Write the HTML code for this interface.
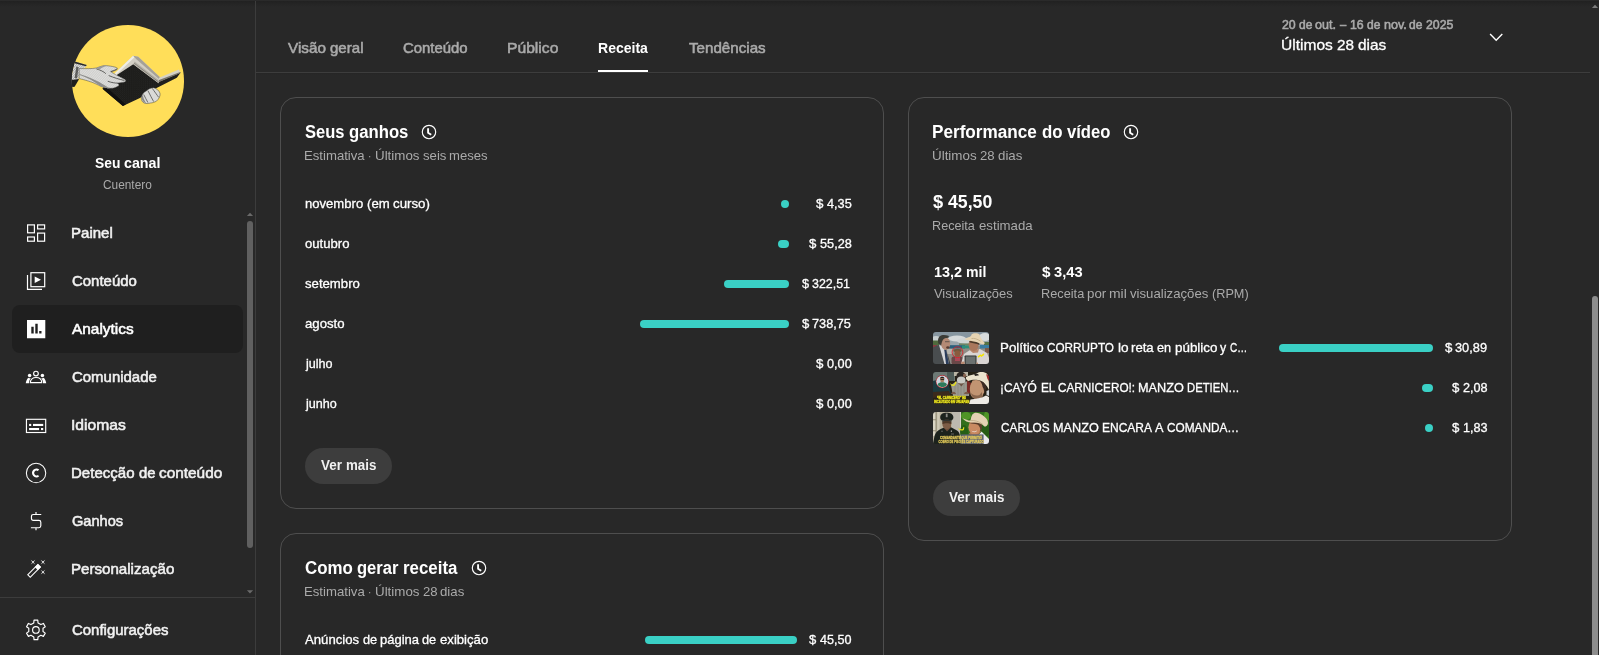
<!DOCTYPE html>
<html lang="pt-BR">
<head>
<meta charset="utf-8">
<title>Analytics do canal - YouTube Studio</title>
<style>
*{box-sizing:border-box;margin:0;padding:0}
html,body{width:1599px;height:655px;overflow:hidden;background:#282828}
body{font-family:"Liberation Sans",sans-serif;color:#fff;position:relative}
.a{position:absolute}
.t{position:absolute;white-space:nowrap;line-height:1;transform-origin:0 50%}
.wr{font-weight:normal}
.wm{font-weight:normal;-webkit-text-stroke:0.3px currentColor}
.wM{font-weight:normal;-webkit-text-stroke:0.55px currentColor}
.wb{font-weight:bold}
.card{position:absolute;border:1px solid #4e4e4e;border-radius:16px}
.bar{position:absolute;height:8px;border-radius:4px;background:#3ad0c5}
.btn{position:absolute;width:87px;height:36px;border-radius:18px;background:#3d3d3d}
.th{position:absolute;width:56px;height:32px;border-radius:3px;overflow:hidden}
.th svg{display:block}
</style>
</head>
<body>
<div class="a" style="left:0;top:1px;width:1599px;height:6px;background:linear-gradient(#212121,#242424 40%,#282828)"></div><div class="a" style="left:0;top:0;width:1599px;height:1px;background:#2a2a2a"></div>
<div class="a" style="left:255px;top:1px;width:1px;height:654px;background:#3c3c3c"></div>
<div class="a" style="left:0;top:597px;width:255px;height:1px;background:#3c3c3c"></div>
<div class="a" style="left:12px;top:305px;width:231px;height:48px;border-radius:8px;background:#1f1f1f"></div>
<div class="a" style="left:247px;top:221px;width:6px;height:327px;border-radius:3px;background:#606060"></div>
<svg class="a" style="left:246px;top:211px" width="8" height="6" viewBox="0 0 8 6"><path d="M0.9 5 L4 1.8 L7.1 5Z" fill="#6a6a6a"/></svg>
<svg class="a" style="left:246px;top:589px" width="8" height="6" viewBox="0 0 8 6"><path d="M0.9 1.3 L4 4.5 L7.1 1.3Z" fill="#6a6a6a"/></svg>
<div class="a" style="left:71.6px;top:24.7px;width:112.8px;height:112px;border-radius:50%;background:#ffde59"></div>
<svg class="a" style="left:68px;top:50px" width="120" height="62" viewBox="0 0 1268 655">
<defs><clipPath id="avc"><circle cx="634" cy="322" r="594"/></clipPath>
<pattern id="hat" width="14" height="14" patternUnits="userSpaceOnUse" patternTransform="rotate(35)"><rect width="14" height="14" fill="#e4e4e2"/><rect width="14" height="4.5" fill="#8c8c8a"/></pattern>
<pattern id="spk" width="22" height="22" patternUnits="userSpaceOnUse"><rect width="22" height="22" fill="#1c1c1a"/><rect x="3" y="5" width="5" height="4" fill="#4a4a48"/><rect x="14" y="15" width="4" height="4" fill="#3c3c3a"/></pattern></defs>
<g clip-path="url(#avc)">
<path d="M30 300 L72 122 L198 158 L182 186 L128 205 L112 300 L60 392 L30 392Z" fill="url(#hat)"/>
<path d="M72 122 L198 158 L190 172 L68 140Z" fill="#2a2a28"/>
<path d="M30 318 L118 306 L70 388 L30 395Z" fill="#1f1f1d"/>
<path d="M88 175 L112 182 L96 300 L70 296Z" fill="#3a3a38" opacity=".75"/>
<path d="M505 262 L690 135 L955 335 L1190 238 L1150 292 L905 418 L760 508 L580 592 L365 410 L420 300 L520 275Z" fill="url(#spk)"/>
<path d="M365 410 L580 592 L610 575 L420 405Z" fill="#101010"/>
<path d="M118 196 C190 196 250 200 300 190 C340 178 370 160 410 166 C450 170 500 176 522 192 C528 208 500 220 452 228 C480 250 560 290 600 310 C618 322 612 338 590 340 C560 346 540 346 520 350 C545 360 545 378 520 386 C500 400 470 408 440 404 C410 402 385 400 350 385 C310 365 280 350 250 340 C200 322 160 312 118 302Z" fill="#dcdcda"/><path d="M118 196 C190 196 250 200 300 190 C340 178 370 160 410 166 C450 170 500 176 522 192 C528 208 500 220 452 228 C480 250 560 290 600 310 C618 322 612 338 590 340 C560 346 540 346 520 350 C545 360 545 378 520 386 C500 400 470 408 440 404 C410 402 385 400 350 385 C310 365 280 350 250 340 C200 322 160 312 118 302Z" fill="url(#hat)" opacity=".28"/><path d="M118 196 C190 196 250 200 300 190 C340 178 370 160 410 166 C450 170 500 176 522 192 C528 208 500 220 452 228 C480 250 560 290 600 310 C618 322 612 338 590 340 C560 346 540 346 520 350 C545 360 545 378 520 386 C500 400 470 408 440 404 C410 402 385 400 350 385 C310 365 280 350 250 340 C200 322 160 312 118 302Z" fill="none" stroke="#3a3a38" stroke-width="6" opacity=".8"/>
<path d="M118 262 C200 290 270 330 350 385 C385 400 410 402 440 404 C400 380 330 330 250 300 C200 280 150 262 118 250Z" fill="#8e8e8c"/>
<path d="M452 228 C470 222 500 214 518 200 M430 270 C480 290 540 310 596 322 M420 330 C460 345 500 350 522 350 M300 200 C340 210 380 230 400 250" stroke="#4c4c4a" stroke-width="9" fill="none"/>
<path d="M300 190 C340 178 370 160 410 166 C380 175 350 190 330 210Z" fill="#9a9a98"/>
<path d="M492 248 L688 62 L742 72 L978 292 L958 350 L690 150 L512 266Z" fill="#d2cec4"/>
<path d="M688 62 L742 72 L978 292 L970 315 L720 95Z" fill="#a5a198"/>
<path d="M492 248 L688 62 L700 80 L515 256Z" fill="#f0eee6"/>
<path d="M690 150 L958 350 L966 322 L705 122Z" fill="#b5b1a7"/><path d="M700 140 L960 340" stroke="#6f6c66" stroke-width="7"/>
<path d="M962 292 L1172 206 L1186 238 L956 338Z" fill="#d6d2c6"/>
<path d="M962 318 L1186 232 L1190 244 L956 342Z" fill="#77736b"/>
<path d="M775 505 C780 465 800 445 830 430 C850 410 880 398 905 398 C935 405 960 428 972 455 C980 480 960 520 935 540 C915 552 890 560 870 560 C850 568 820 568 805 560 C785 550 772 530 775 505Z" fill="#dadad8"/><path d="M775 505 C780 465 800 445 830 430 C850 410 880 398 905 398 C935 405 960 428 972 455 C980 480 960 520 935 540 C915 552 890 560 870 560 C850 568 820 568 805 560 C785 550 772 530 775 505Z" fill="none" stroke="#3a3a38" stroke-width="6" opacity=".8"/>
<path d="M800 470 C815 500 830 530 845 556 M845 430 C865 470 885 510 905 545 M890 405 C915 440 940 475 958 500" stroke="#5a5a58" stroke-width="9" fill="none"/>
<path d="M775 505 C785 540 805 560 830 566 C810 540 795 510 790 470Z" fill="#8a8a88"/>
</g></svg>
<svg class="a" style="left:0;top:0" width="255" height="655" viewBox="0 0 255 655"><g transform="translate(24,221)"><g fill="none" stroke="#fff" stroke-width="1.2"><rect x="3.6" y="3.9" width="6.8" height="7.9"/><rect x="13.6" y="3.9" width="7" height="4.0"/><rect x="3.6" y="16.0" width="6.8" height="4.2"/><rect x="13.6" y="12.1" width="7" height="8.1"/></g></g><g transform="translate(24,269)"><g fill="none" stroke="#fff" stroke-width="1.2"><rect x="6.9" y="3.7" width="13.8" height="14"/><path d="M3.5 6.1 V20.3 H18"/></g><path d="M10.7 7.4 V14.1 L17 10.75Z" fill="#fff"/></g><g transform="translate(24,317)"><path fill="#fff" fill-rule="evenodd" d="M3 3H21.3V21.2H3Z M7.3 9.8H9.7V16.4H7.3Z M11.3 6.8H13.7V16.4H11.3Z M15.2 13.9H17.5V16.4H15.2Z"/></g><g transform="translate(24,365)"><g fill="none" stroke="#fff" stroke-width="1.15"><circle cx="11.96" cy="8.55" r="2.35"/><path d="M6.3 17.65 C6.3 14.3 8.9 12.5 12 12.5 S17.7 14.3 17.7 17.65 Z"/></g><g fill="#fff"><circle cx="5.6" cy="10.6" r="1.75"/><circle cx="18.4" cy="10.6" r="1.75"/><path d="M4.3 12.7 C3 14 2 16 1.75 18.2 H5.0 C5.1 16.1 5.7 14.4 6.8 13.3 C5.9 13.3 5 13.2 4.3 12.7Z"/><path d="M19.7 12.7 C21 14 22 16 22.25 18.2 H19.0 C18.9 16.1 18.3 14.4 17.2 13.3 C18.1 13.3 19 13.2 19.7 12.7Z"/></g></g><g transform="translate(0,0)"><rect x="26.45" y="419.3" width="19.25" height="13.2" fill="none" stroke="#fff" stroke-width="1.15"/><g fill="#fff"><rect x="29.1" y="423.9" width="2.1" height="2.1"/><rect x="33" y="423.9" width="10.2" height="2.1"/><rect x="29.1" y="428" width="10" height="2.1"/><rect x="41" y="428" width="2.2" height="2.1"/></g></g><g transform="translate(0,0)"><circle cx="36.06" cy="472.95" r="9.7" fill="none" stroke="#fff" stroke-width="1.05"/><path d="M38.5 470.3 A3.2 3.55 0 1 0 38.5 475.6" fill="none" stroke="#fff" stroke-width="2"/></g><g transform="translate(0,0)"><path fill="none" stroke="#fff" stroke-width="1.15" d="M41.25 514.5 H33.4 Q31.45 514.5 31.45 516.4 V518.4 Q31.45 520.3 33.4 520.3 H38.9 Q40.8 520.3 40.8 522.2 V525.8 Q40.8 527.7 38.9 527.7 H30.9 M36 512 V514.5 M36 527.7 V530.2"/></g><g transform="translate(0,0)"><g transform="translate(34.07,570.9) rotate(-45)"><rect x="-7.15" y="-1.75" width="14.3" height="3.5" fill="none" stroke="#fff" stroke-width="1.05"/><rect x="3.2" y="-2.2" width="4.45" height="4.4" fill="#fff"/></g><path fill="#fff" d="M30.7 559.85 L33.0 561.6 L35.3 559.85 L33.55 562.15 L35.3 564.4499999999999 L33.0 562.6999999999999 L30.7 564.4499999999999 L32.45 562.15Z"/><path fill="#fff" d="M40.67 559.85 L42.97 561.6 L45.269999999999996 559.85 L43.519999999999996 562.15 L45.269999999999996 564.4499999999999 L42.97 562.6999999999999 L40.67 564.4499999999999 L42.42 562.15Z"/><path fill="#fff" d="M40.67 569.8000000000001 L42.97 571.5500000000001 L45.269999999999996 569.8000000000001 L43.519999999999996 572.1 L45.269999999999996 574.4 L42.97 572.65 L40.67 574.4 L42.42 572.1Z"/></g><path d="M33.77 622.92 L34.01 620.18 L37.79 620.18 L38.03 622.92 L40.88 624.56 L43.37 623.41 L45.26 626.68 L43.01 628.26 L43.01 631.54 L45.26 633.12 L43.37 636.39 L40.88 635.24 L38.03 636.88 L37.79 639.62 L34.01 639.62 L33.77 636.88 L30.92 635.24 L28.43 636.39 L26.54 633.12 L28.79 631.54 L28.79 628.26 L26.54 626.68 L28.43 623.41 L30.92 624.56Z" fill="none" stroke="#fff" stroke-width="1.15" stroke-linejoin="round"/><circle cx="35.9" cy="629.9" r="3.3" fill="none" stroke="#fff" stroke-width="1.15"/></svg>
<div class="a" style="left:256px;top:72px;width:1334px;height:1px;background:#3d3d3d"></div>
<div class="a" style="left:256px;top:73px;width:1334px;height:2px;background:linear-gradient(#252525,#282828)"></div>
<div class="a" style="left:598.4px;top:70px;width:49.6px;height:2.3px;background:#fff"></div>
<svg class="a" style="left:1486px;top:30px" width="20" height="14" viewBox="0 0 20 14"><path d="M4.1 4.1 L10.2 10.3 L16.3 4.1" fill="none" stroke="#fff" stroke-width="1.4"/></svg>
<div class="a" style="left:1592px;top:296px;width:6px;height:380px;border-radius:3px;background:#8c8c8c"></div>
<svg class="a" style="left:1591px;top:3px" width="8" height="6" viewBox="0 0 8 6"><path d="M0.9 5 L4 1.8 L7.1 5Z" fill="#7c7c7c"/></svg>
<div class="card" style="left:280px;top:97px;width:604px;height:412px"></div>
<div class="card" style="left:908px;top:97px;width:604px;height:444px"></div>
<div class="card" style="left:280px;top:533px;width:604px;height:200px"></div>
<svg class="a" style="left:419px;top:122.05000000000001px" width="20" height="20" viewBox="-10 -10 20 20"><circle r="6.7" fill="none" stroke="#fff" stroke-width="1.15"/><path d="M-0.9 -3.85 V0.7 L2.2 2.7" fill="none" stroke="#fff" stroke-width="1.9"/></svg>
<svg class="a" style="left:1120.8px;top:122.05000000000001px" width="20" height="20" viewBox="-10 -10 20 20"><circle r="6.7" fill="none" stroke="#fff" stroke-width="1.15"/><path d="M-0.9 -3.85 V0.7 L2.2 2.7" fill="none" stroke="#fff" stroke-width="1.9"/></svg>
<svg class="a" style="left:469px;top:558.05px" width="20" height="20" viewBox="-10 -10 20 20"><circle r="6.7" fill="none" stroke="#fff" stroke-width="1.15"/><path d="M-0.9 -3.85 V0.7 L2.2 2.7" fill="none" stroke="#fff" stroke-width="1.9"/></svg>
<div class="bar" style="left:781px;top:200px;width:8px"></div>
<div class="bar" style="left:778px;top:240px;width:11px"></div>
<div class="bar" style="left:724px;top:280px;width:65px"></div>
<div class="bar" style="left:640px;top:320px;width:149px"></div>
<div class="bar" style="left:645px;top:636px;width:152px"></div>
<div class="bar" style="left:1279px;top:344px;width:154px"></div>
<div class="bar" style="left:1422px;top:384px;width:11px"></div>
<div class="bar" style="left:1424.5px;top:424px;width:8.5px"></div>
<div class="btn" style="left:305px;top:448px"></div>
<div class="btn" style="left:933px;top:480px"></div>
<svg class="a" style="left:933px;top:332px" width="56" height="32" viewBox="0 0 56 32"><defs><clipPath id="t1c"><rect width="56" height="32" rx="3" ry="3"/></clipPath><filter id="t1cb" x="-10%" y="-10%" width="120%" height="120%"><feGaussianBlur stdDeviation="0.45"/></filter></defs><g clip-path="url(#t1c)"><g filter="url(#t1cb)">
<rect width="56" height="32" fill="#9aa6ac"/>
<rect width="56" height="6" fill="#8796a0"/>
<ellipse cx="24" cy="6.5" rx="9" ry="3" fill="#d5d9da"/>
<ellipse cx="36" cy="9" rx="12" ry="3.2" fill="#cfd4d4"/>
<ellipse cx="52" cy="5" rx="6" ry="4" fill="#d8dcdc"/>
<ellipse cx="3" cy="7" rx="5" ry="3" fill="#c8cfd0"/>
<rect y="8.5" width="6" height="5" fill="#4f6a3c"/>
<rect x="51" y="10" width="5" height="4" fill="#557244"/>
<rect x="26" y="11.4" width="10" height="2.2" fill="#6f8466"/>
<rect y="14" width="56" height="18" fill="#8f8d86"/>
<rect x="16" y="13.2" width="16" height="3.2" fill="#2a5e7c"/>
<rect x="29" y="13.4" width="8" height="3" fill="#2f8f7a"/>
<rect x="47" y="13" width="9" height="3.5" fill="#3a7ca0"/>
<rect y="13" width="4" height="3" fill="#8a3a40"/>
<rect x="52" y="16" width="4" height="5" fill="#7a5a4a"/>
<rect x="14" y="17" width="6" height="5" fill="#b7b5ae"/>
<!-- center person -->
<rect x="18.5" y="24.5" width="11" height="8" rx="2" fill="#6b4646"/>
<rect x="22" y="25" width="5" height="4" fill="#a84a58"/>
<ellipse cx="24.5" cy="18.6" rx="4.2" ry="1.8" fill="#6e5a3c"/>
<ellipse cx="24.5" cy="21.6" rx="3" ry="3.2" fill="#8a5a3c"/>
<circle cx="24.5" cy="20.2" r="5.4" fill="none" stroke="#d8242a" stroke-width="0.9"/>
<!-- left man -->
<path d="M0 15.5 L5 13 L10 13.5 L17 32 L0 32Z" fill="#4a4d4f"/>
<path d="M6 13 L10 14 L17 32 L11.5 32Z" fill="#d7d8da"/>
<path d="M11.3 18 L13.2 18 L16 32 L13 32Z" fill="#2b3c5c"/>
<path d="M14 20 L17.5 32 L16 32Z" fill="#3e4143"/>
<ellipse cx="12.6" cy="11.6" rx="4.6" ry="6.2" fill="#b48a74"/>
<path d="M5 9 C5 3 10 2.2 15.5 3.8 C16.5 5.5 15 6 12 6.2 C9.5 7 9 10 8.2 13 C6 13 5 11.5 5 9Z" fill="#3b3a35"/>
<ellipse cx="14.8" cy="15.5" rx="1.6" ry="1.2" fill="#5a3a30"/>
<rect x="12" y="9.3" width="4.5" height="0.9" fill="#5b5049"/>
<!-- right man -->
<path d="M28 32 L31 22 L37 18 L47 17 L54 21 L56 26 L56 32Z" fill="#d9d5d3"/>
<path d="M36.5 18 L40 21 L45 20.5 L46 17Z" fill="#b7866c"/>
<ellipse cx="40.6" cy="12.8" rx="5" ry="6.2" fill="#a9775c"/>
<path d="M36 9 L46 9.5 L46.5 13 L44 12 L37 10.5Z" fill="#4c3a2c"/>
<path d="M31.5 7.2 C36 4.5 38 5.5 38.5 2.5 C40 0.8 45 0.8 46.5 2.6 C47.5 5 48 7 51.5 10.5 C52.5 12.5 50 12.6 47 11.6 C42 9 37 9.2 33 7.8Z" fill="#e6d4b3"/>
<path d="M38.5 6.5 C41 6 44.5 7 47.5 9.2" stroke="#bfa983" stroke-width="0.8" fill="none"/>
<rect x="31.6" y="23.4" width="11.9" height="9" rx="0.8" fill="#2f3231"/>
<rect x="32.6" y="24.4" width="9.9" height="8" fill="#6c726f"/>
<path d="M28 32 C28 29.5 30 29 31.6 30 L31.6 32Z" fill="#b98a70"/>
<path d="M43.5 30 L45 31 L45 32 L43.5 32Z" fill="#b98a70"/>
<path d="M44.6 24.6 L47.5 22.2 L48 23.2 L51 21.3 L51.2 23 L48.3 25 L47.6 24 L45.4 25.8Z" fill="#f4e400"/>
</g></g></svg><svg class="a" style="left:933px;top:372px" width="56" height="32" viewBox="0 0 56 32"><defs><clipPath id="t2c"><rect width="56" height="32" rx="3" ry="3"/></clipPath><filter id="t2cb" x="-10%" y="-10%" width="120%" height="120%"><feGaussianBlur stdDeviation="0.45"/></filter></defs><g clip-path="url(#t2c)"><g filter="url(#t2cb)">
<rect width="56" height="32" fill="#262018"/>
<rect width="22" height="9" fill="#6d7975"/>
<rect x="14" width="7" height="9" fill="#4f5b58"/>
<rect x="21" width="14" height="4" fill="#b9b4a4"/>
<path d="M0 9 L8 7 L15 10 L18 22 L0 24Z" fill="#1d3a40"/>
<path d="M0 20 L16 19 L18 24 L0 26Z" fill="#3a2a1c"/>
<!-- middle person -->
<path d="M18 13 L23 9.5 L34 9.5 L37 13 L36 24 L20 24Z" fill="#9b9990"/>
<path d="M22 10 L22 24 M25 10 L25 24 M28 11 L28 24 M31 10 L31 24 M34 11 L34 24" stroke="#7c7a72" stroke-width="0.5"/>
<path d="M34 8 L38 11 L37 21 L34 22Z" fill="#7a2a28"/>
<path d="M25 11 L28.5 14.5 L31 11Z" fill="#6a5244"/>
<ellipse cx="28" cy="4.2" rx="4.6" ry="4.4" fill="#2b2621"/>
<ellipse cx="28.2" cy="8" rx="4.3" ry="3.6" fill="#c9c9c4"/>
<ellipse cx="31.5" cy="3.5" rx="1.5" ry="2" fill="#8a6450"/>
<path d="M18 22 C19 19 22 19 23 22Z" fill="#7a5a48"/>
<path d="M31 22 C32 19 35 19 36 22Z" fill="#7a5a48"/>
<!-- inset circle -->
<circle cx="9.3" cy="9.6" r="6.5" fill="#b03038"/>
<circle cx="9.3" cy="9.6" r="5.9" fill="#e9e3e3"/>
<circle cx="9.3" cy="9.6" r="5.5" fill="#cdd6df"/>
<path d="M4.6 12.4 C5.5 10.6 7.5 10.2 9.3 10.2 C11.2 10.2 13 10.6 14 12.4 C13 14.2 11.4 15.1 9.3 15.1 C7.2 15.1 5.6 14.2 4.6 12.4Z" fill="#2f7a5c"/>
<ellipse cx="9.2" cy="7.6" rx="2.1" ry="2.7" fill="#a67c5e"/>
<path d="M7 6.6 C7 4.2 11.4 4.2 11.4 6.6 C10 5.8 8.4 5.8 7 6.6Z" fill="#231f1c"/>
<rect x="7.6" y="7" width="3.4" height="0.9" fill="#2a2320"/>
<path d="M6.5 14 L8 14.8 L7 15.2Z" fill="#c9a080"/>
<!-- arrow -->
<path d="M17.2 10.8 C18 12.6 19.5 13 21 12.2 L22.5 9.6 L23.6 10.4 L22 13.2 C20 15 17.5 14 17.2 10.8Z" fill="#e9e11a"/>
<!-- right man -->
<path d="M33 5 C36 3 41 3 44 1.2 C46 -0.5 52 -0.5 54 1.8 C55.5 4 56 8 56 15 L56 18 C54 13 50 9 45 8 C41 7.4 38 8 35.5 9 C33.5 8.4 32.5 6.5 33 5Z" fill="#ebe3cd"/>
<path d="M41 1.8 C43.5 1 45 1.8 46 3.2 L42 4Z" fill="#2a2520"/>
<path d="M53 2 L56 4 L56 9 L54.5 7Z" fill="#9a2a2a"/>
<path d="M39.5 8.6 C43 7.4 48 8.2 51 11 C53 14 52.5 19 50.5 21.5 L49 25.5 L43 27 C40 26.5 37.5 24 37.2 20.5 L36.8 17 L37.2 13.5Z" fill="#c19472"/>
<path d="M46.5 8.6 C49.5 9.2 52 11 52.6 14 C53 17 52.4 19.5 51.4 21.5 C51.2 19 50.8 16.5 49.6 15 C49.2 12.5 48.4 10.4 46.5 8.6Z" fill="#3a2a20"/>
<path d="M38 21 C39.8 23.2 43 24.2 46.5 23 L48.8 20 L49.5 25 L43 27 C40.2 26.5 38.4 24.4 38 21Z" fill="#8a664e"/>
<path d="M36 32 L37.5 27.5 L43 26.8 L49 25.5 L53 23.5 L56 25 L56 32Z" fill="#eeebe6"/>
<path d="M53.5 19 L56 18 L56 24 L53.5 23Z" fill="#cfd3d6"/>
<!-- yellow text -->
<g font-family="Liberation Sans, sans-serif" font-weight="bold" fill="#e9e31d" stroke="#e9e31d" stroke-width="0.35">
<text x="4" y="26.9" font-size="4.1" textLength="29" lengthAdjust="spacingAndGlyphs">“EL CARNICERO” ES</text>
<text x="1" y="31.4" font-size="4.1" textLength="35.2" lengthAdjust="spacingAndGlyphs">INCAUTADO EN URUAPAN</text>
</g>
</g></g></svg><svg class="a" style="left:933px;top:412px" width="56" height="32" viewBox="0 0 56 32"><defs><clipPath id="t3c"><rect width="56" height="32" rx="3" ry="3"/></clipPath><filter id="t3cb" x="-10%" y="-10%" width="120%" height="120%"><feGaussianBlur stdDeviation="0.45"/></filter></defs><g clip-path="url(#t3c)"><g filter="url(#t3cb)">
<rect width="28" height="32" fill="#b9b29e"/>
<rect x="0" width="3.2" height="24" fill="#d9d4c4"/>
<rect x="2.6" width="0.9" height="24" fill="#7d775f"/>
<rect y="7.4" width="3" height="0.8" fill="#857f66"/>
<rect y="18.4" width="3" height="0.8" fill="#857f66"/>
<rect x="4.2" width="2.4" height="24" fill="#cfc9b6"/>
<rect x="19" y="0" width="9" height="22" fill="#bdb9af"/>
<rect x="27" width="1.2" height="32" fill="#d9d5c9"/>
<rect x="28.2" width="27.8" height="32" fill="#33701d"/>
<ellipse cx="33" cy="4" rx="5" ry="4" fill="#4f9428"/>
<ellipse cx="52" cy="18" rx="5" ry="7" fill="#265c14"/>
<ellipse cx="31" cy="20" rx="4" ry="7" fill="#275e16"/>
<ellipse cx="54" cy="4" rx="3" ry="5" fill="#4f9428"/>
<!-- officer -->
<path d="M0 32 L1.5 24 C3 19 7 17 10 16 L17.5 15 L24 18.5 C26.5 20 27.5 24 27.8 32Z" fill="#1b211e"/>
<path d="M10.5 15.5 L14 19.5 L18 15.5 L17.5 13 L11 13Z" fill="#6b4c38"/>
<ellipse cx="13.8" cy="11.6" rx="4.5" ry="5.6" fill="#7d5c44"/>
<path d="M9.4 10 C11 8.6 16.5 8.6 18.4 10 L18.2 12 C16 11 11.5 11 9.6 12Z" fill="#4e3828"/>
<path d="M7.2 5.6 C7.2 2 10 0.8 13.6 0.8 C17.4 0.8 20.4 2 20.4 5.6 C20.4 7.2 19.4 8 18.6 8.4 C16.5 7.4 11 7.4 9 8.4 C8 8 7.2 7.2 7.2 5.6Z" fill="#1d201e"/>
<path d="M9 8.4 C11 7.4 16.5 7.4 18.6 8.4 L18.4 9.8 C16.5 8.8 11 8.8 9.2 9.8Z" fill="#2e312e"/>
<rect x="12.8" y="1.6" width="1.8" height="3.6" fill="#8d8d86"/>
<rect x="17.8" y="18.4" width="1.2" height="1.6" fill="#9a9a94"/>
<rect x="8.4" y="18.6" width="1.2" height="1.4" fill="#6d6d68"/>
<rect x="18" y="21.6" width="3" height="0.8" fill="#77776f"/>
<!-- hat man -->
<path d="M44 32 L45 24 L48.5 19.5 L52 23 L56 27 L56 32Z" fill="#e9e9ec"/>
<path d="M36 21 L38 25.5 L45 24.2 L48 19Z" fill="#b87850"/>
<ellipse cx="41.6" cy="15.2" rx="6.2" ry="7.4" fill="#c98a62"/>
<path d="M36.4 11 C40 9.6 46 10 48.6 12 C49.4 14.5 49 17.5 48 19.5 C47.4 16 46.4 13.6 44.4 12.4 C41.5 11.6 38.5 11.8 36.4 11Z" fill="#5a3e2c"/>
<path d="M38.4 18.6 C40 20 42.6 19.8 44.2 18 C43.5 20.6 39.8 21.2 38.4 18.6Z" fill="#f1ede8"/>
<path d="M29.5 6.2 C32 7 35 8.6 37.5 8.6 C38.2 5 38.6 2.2 41 1.2 C44 0.2 47.5 1.6 50 3.6 C52.5 5.4 54.6 7.4 55 10.4 C55.2 13 53.4 14.6 51.4 14.6 C49 11.4 44 10 38.5 10.6 C35 10.6 31.5 9 29.5 6.2Z" fill="#e4d2b3"/>
<path d="M37.6 8.6 C41 8 46 9.4 49.6 12.2" stroke="#b79f7b" stroke-width="0.7" fill="none"/>
<!-- arrow -->
<path d="M25 15.6 C26 17 28 17.6 29.8 17 L30.4 15 L31.4 15.4 L30.8 18 C28.4 19.2 25.6 18.2 25 15.6Z" fill="#e5e01c"/>
<!-- caption bg -->
<rect x="28.2" y="22.4" width="22.4" height="9.6" fill="#5b6272"/>
<g font-family="Liberation Sans, sans-serif" font-weight="bold" fill="#e3c95a" stroke="#e3c95a" stroke-width="0.3">
<text x="7" y="26.8" font-size="4.2" textLength="42" lengthAdjust="spacingAndGlyphs">COMANDANTE QUE PERMITIÓ</text>
<text x="5.6" y="31.3" font-size="4.2" textLength="45" lengthAdjust="spacingAndGlyphs">COBRO DE PISO ES CAPTURADO</text>
</g>
</g></g></svg>
<div class="t wb" style="left:94.80px;top:155.30px;font-size:15px;color:#ffffff;transform:scaleX(0.9222)">Seu</div>
<div class="t wb" style="left:123.92px;top:155.30px;font-size:15px;color:#ffffff;transform:scaleX(0.9500)">canal</div>
<div class="t wr" style="left:103.00px;top:178.84px;font-size:12px;color:#aaaaaa;transform:scaleX(0.9884)">Cuentero</div>
<div class="t wM" style="left:71.35px;top:225.30px;font-size:15px;color:#f1f1f1;transform:scaleX(1.0017)">Painel</div>
<div class="t wM" style="left:72.30px;top:273.30px;font-size:15px;color:#f1f1f1;transform:scaleX(0.9965)">Conteúdo</div>
<div class="t wM" style="left:72.30px;top:321.30px;font-size:15px;color:#ffffff;transform:scaleX(1.0259)">Analytics</div>
<div class="t wM" style="left:72.30px;top:369.30px;font-size:15px;color:#f1f1f1;transform:scaleX(0.9973)">Comunidade</div>
<div class="t wM" style="left:71.35px;top:417.30px;font-size:15px;color:#f1f1f1;transform:scaleX(1.0438)">Idiomas</div>
<div class="t wM" style="left:71.35px;top:465.30px;font-size:15px;color:#f1f1f1;transform:scaleX(1.0021)">Detecção</div>
<div class="t wM" style="left:138.59px;top:465.30px;font-size:15px;color:#f1f1f1;transform:scaleX(0.9904)">de</div>
<div class="t wM" style="left:158.85px;top:465.30px;font-size:15px;color:#f1f1f1;transform:scaleX(1.0251)">conteúdo</div>
<div class="t wM" style="left:72.30px;top:513.30px;font-size:15px;color:#f1f1f1;transform:scaleX(0.9741)">Ganhos</div>
<div class="t wM" style="left:71.35px;top:561.30px;font-size:15px;color:#f1f1f1;transform:scaleX(1.0070)">Personalização</div>
<div class="t wM" style="left:72.30px;top:622.30px;font-size:15px;color:#f1f1f1;transform:scaleX(0.9974)">Configurações</div>
<div class="t wM" style="left:288.20px;top:40.30px;font-size:15px;color:#aaaaaa;transform:scaleX(1.0174)">Visão</div>
<div class="t wM" style="left:329.84px;top:40.30px;font-size:15px;color:#aaaaaa;transform:scaleX(1.0036)">geral</div>
<div class="t wM" style="left:403.30px;top:40.30px;font-size:15px;color:#aaaaaa;transform:scaleX(0.9934)">Conteúdo</div>
<div class="t wM" style="left:507.05px;top:40.30px;font-size:15px;color:#aaaaaa;transform:scaleX(1.0443)">Público</div>
<div class="t wb" style="left:597.85px;top:40.30px;font-size:15px;color:#ffffff;transform:scaleX(0.9356)">Receita</div>
<div class="t wM" style="left:689.00px;top:40.30px;font-size:15px;color:#aaaaaa;transform:scaleX(1.0104)">Tendências</div>
<div class="t wM" style="left:1282.20px;top:18.84px;font-size:12px;color:#aaaaaa;transform:scaleX(1.0264)">20</div>
<div class="t wM" style="left:1298.92px;top:18.84px;font-size:12px;color:#aaaaaa;transform:scaleX(0.9996)">de</div>
<div class="t wM" style="left:1315.28px;top:18.84px;font-size:12px;color:#aaaaaa;transform:scaleX(1.0433)">out.</div>
<div class="t wM" style="left:1340.17px;top:18.84px;font-size:12px;color:#aaaaaa;transform:scaleX(0.9354)">–</div>
<div class="t wM" style="left:1350.42px;top:18.84px;font-size:12px;color:#aaaaaa;transform:scaleX(1.0264)">16</div>
<div class="t wM" style="left:1367.14px;top:18.84px;font-size:12px;color:#aaaaaa;transform:scaleX(0.9996)">de</div>
<div class="t wM" style="left:1383.50px;top:18.84px;font-size:12px;color:#aaaaaa;transform:scaleX(1.0466)">nov.</div>
<div class="t wM" style="left:1409.33px;top:18.84px;font-size:12px;color:#aaaaaa;transform:scaleX(0.9996)">de</div>
<div class="t wM" style="left:1425.69px;top:18.84px;font-size:12px;color:#aaaaaa;transform:scaleX(1.0264)">2025</div>
<div class="t wm" style="left:1281.25px;top:37.30px;font-size:15px;color:#ffffff;transform:scaleX(1.0369)">Últimos</div>
<div class="t wm" style="left:1336.85px;top:37.30px;font-size:15px;color:#ffffff;transform:scaleX(1.0196)">28</div>
<div class="t wm" style="left:1357.61px;top:37.30px;font-size:15px;color:#ffffff;transform:scaleX(1.0273)">dias</div>
<div class="t wb" style="left:305.40px;top:122.76px;font-size:18px;color:#ffffff;transform:scaleX(0.9177)">Seus</div>
<div class="t wb" style="left:349.35px;top:122.76px;font-size:18px;color:#ffffff;transform:scaleX(0.9276)">ganhos</div>
<div class="t wr" style="left:304.45px;top:149.00px;font-size:13px;color:#aaaaaa;transform:scaleX(1.0121)">Estimativa</div>
<div class="t wr" style="left:368.35px;top:149.00px;font-size:13px;color:#aaaaaa;transform:scaleX(0.7824)">·</div>
<div class="t wr" style="left:374.95px;top:149.00px;font-size:13px;color:#aaaaaa;transform:scaleX(1.0260)">Últimos</div>
<div class="t wr" style="left:422.63px;top:149.00px;font-size:13px;color:#aaaaaa;transform:scaleX(1.0135)">seis</div>
<div class="t wr" style="left:449.28px;top:149.00px;font-size:13px;color:#aaaaaa;transform:scaleX(1.0067)">meses</div>
<div class="t wm" style="left:305.40px;top:197.00px;font-size:13px;color:#ffffff;transform:scaleX(1.0061)">novembro</div>
<div class="t wm" style="left:366.77px;top:197.00px;font-size:13px;color:#ffffff;transform:scaleX(1.0131)">(em</div>
<div class="t wm" style="left:392.67px;top:197.00px;font-size:13px;color:#ffffff;transform:scaleX(1.0229)">curso)</div>
<div class="t wm" style="left:305.40px;top:237.00px;font-size:13px;color:#ffffff;transform:scaleX(1.0074)">outubro</div>
<div class="t wm" style="left:305.40px;top:277.00px;font-size:13px;color:#ffffff;transform:scaleX(1.0116)">setembro</div>
<div class="t wm" style="left:305.40px;top:317.00px;font-size:13px;color:#ffffff;transform:scaleX(1.0150)">agosto</div>
<div class="t wm" style="left:306.35px;top:357.00px;font-size:13px;color:#ffffff;transform:scaleX(0.9673)">julho</div>
<div class="t wm" style="left:306.35px;top:397.00px;font-size:13px;color:#ffffff;transform:scaleX(0.9673)">junho</div>
<div class="t wm" style="left:816.00px;top:197.00px;font-size:13px;color:#ffffff;transform:scaleX(1.0226)">$</div>
<div class="t wm" style="left:826.65px;top:197.00px;font-size:13px;color:#ffffff;transform:scaleX(0.9788)">4,35</div>
<div class="t wm" style="left:809.00px;top:237.00px;font-size:13px;color:#ffffff;transform:scaleX(1.0132)">$</div>
<div class="t wm" style="left:819.56px;top:237.00px;font-size:13px;color:#ffffff;transform:scaleX(0.9795)">55,28</div>
<div class="t wm" style="left:801.80px;top:277.00px;font-size:13px;color:#ffffff;transform:scaleX(0.9822)">$</div>
<div class="t wm" style="left:812.03px;top:277.00px;font-size:13px;color:#ffffff;transform:scaleX(0.9554)">322,51</div>
<div class="t wm" style="left:801.80px;top:317.00px;font-size:13px;color:#ffffff;transform:scaleX(1.0066)">$</div>
<div class="t wm" style="left:812.29px;top:317.00px;font-size:13px;color:#ffffff;transform:scaleX(0.9791)">738,75</div>
<div class="t wm" style="left:816.00px;top:357.00px;font-size:13px;color:#ffffff;transform:scaleX(1.0197)">$</div>
<div class="t wm" style="left:826.62px;top:357.00px;font-size:13px;color:#ffffff;transform:scaleX(0.9760)">0,00</div>
<div class="t wm" style="left:816.00px;top:397.00px;font-size:13px;color:#ffffff;transform:scaleX(1.0197)">$</div>
<div class="t wm" style="left:826.62px;top:397.00px;font-size:13px;color:#ffffff;transform:scaleX(0.9760)">0,00</div>
<div class="t wb" style="left:321.20px;top:458.15px;font-size:14px;color:#f1f1f1;transform:scaleX(0.9603)">Ver</div>
<div class="t wb" style="left:345.58px;top:458.15px;font-size:14px;color:#f1f1f1;transform:scaleX(0.9501)">mais</div>
<div class="t wb" style="left:305.20px;top:558.76px;font-size:18px;color:#ffffff;transform:scaleX(0.9374)">Como</div>
<div class="t wb" style="left:357.44px;top:558.76px;font-size:18px;color:#ffffff;transform:scaleX(0.9198)">gerar</div>
<div class="t wb" style="left:403.29px;top:558.76px;font-size:18px;color:#ffffff;transform:scaleX(0.9368)">receita</div>
<div class="t wr" style="left:304.25px;top:585.00px;font-size:13px;color:#aaaaaa;transform:scaleX(1.0130)">Estimativa</div>
<div class="t wr" style="left:368.21px;top:585.00px;font-size:13px;color:#aaaaaa;transform:scaleX(0.7831)">·</div>
<div class="t wr" style="left:374.82px;top:585.00px;font-size:13px;color:#aaaaaa;transform:scaleX(1.0270)">Últimos</div>
<div class="t wr" style="left:422.54px;top:585.00px;font-size:13px;color:#aaaaaa;transform:scaleX(1.0098)">28</div>
<div class="t wr" style="left:440.36px;top:585.00px;font-size:13px;color:#aaaaaa;transform:scaleX(1.0175)">dias</div>
<div class="t wm" style="left:305.20px;top:633.00px;font-size:13px;color:#ffffff;transform:scaleX(1.0114)">Anúncios</div>
<div class="t wm" style="left:362.51px;top:633.00px;font-size:13px;color:#ffffff;transform:scaleX(0.9836)">de</div>
<div class="t wm" style="left:379.95px;top:633.00px;font-size:13px;color:#ffffff;transform:scaleX(1.0008)">página</div>
<div class="t wm" style="left:422.24px;top:633.00px;font-size:13px;color:#ffffff;transform:scaleX(0.9836)">de</div>
<div class="t wm" style="left:439.68px;top:633.00px;font-size:13px;color:#ffffff;transform:scaleX(1.0113)">exibição</div>
<div class="t wm" style="left:809.10px;top:633.00px;font-size:13px;color:#ffffff;transform:scaleX(1.0037)">$</div>
<div class="t wm" style="left:819.56px;top:633.00px;font-size:13px;color:#ffffff;transform:scaleX(0.9702)">45,50</div>
<div class="t wb" style="left:932.45px;top:122.76px;font-size:18px;color:#ffffff;transform:scaleX(0.9531)">Performance</div>
<div class="t wb" style="left:1041.83px;top:122.76px;font-size:18px;color:#ffffff;transform:scaleX(0.9360)">do</div>
<div class="t wb" style="left:1066.91px;top:122.76px;font-size:18px;color:#ffffff;transform:scaleX(0.9229)">vídeo</div>
<div class="t wr" style="left:932.45px;top:149.00px;font-size:13px;color:#aaaaaa;transform:scaleX(1.0300)">Últimos</div>
<div class="t wr" style="left:980.31px;top:149.00px;font-size:13px;color:#aaaaaa;transform:scaleX(1.0128)">28</div>
<div class="t wr" style="left:998.19px;top:149.00px;font-size:13px;color:#aaaaaa;transform:scaleX(1.0205)">dias</div>
<div class="t wb" style="left:933.40px;top:192.76px;font-size:18px;color:#ffffff;transform:scaleX(1.0163)">$</div>
<div class="t wb" style="left:948.06px;top:192.76px;font-size:18px;color:#ffffff;transform:scaleX(0.9824)">45,50</div>
<div class="t wr" style="left:932.45px;top:219.00px;font-size:13px;color:#aaaaaa;transform:scaleX(0.9728)">Receita</div>
<div class="t wr" style="left:978.53px;top:219.00px;font-size:13px;color:#aaaaaa;transform:scaleX(1.0168)">estimada</div>
<div class="t wb" style="left:934.20px;top:264.30px;font-size:15px;color:#ffffff;transform:scaleX(0.9646)">13,2</div>
<div class="t wb" style="left:966.07px;top:264.30px;font-size:15px;color:#ffffff;transform:scaleX(0.9408)">mil</div>
<div class="t wb" style="left:1041.50px;top:264.30px;font-size:15px;color:#ffffff;transform:scaleX(1.0216)">$</div>
<div class="t wb" style="left:1053.78px;top:264.30px;font-size:15px;color:#ffffff;transform:scaleX(0.9778)">3,43</div>
<div class="t wr" style="left:933.50px;top:287.00px;font-size:13px;color:#aaaaaa;transform:scaleX(0.9921)">Visualizações</div>
<div class="t wr" style="left:1040.55px;top:287.00px;font-size:13px;color:#aaaaaa;transform:scaleX(0.9805)">Receita</div>
<div class="t wr" style="left:1087.00px;top:287.00px;font-size:13px;color:#aaaaaa;transform:scaleX(1.0207)">por</div>
<div class="t wr" style="left:1109.41px;top:287.00px;font-size:13px;color:#aaaaaa;transform:scaleX(1.0701)">mil</div>
<div class="t wr" style="left:1130.41px;top:287.00px;font-size:13px;color:#aaaaaa;transform:scaleX(1.0130)">visualizações</div>
<div class="t wr" style="left:1211.96px;top:287.00px;font-size:13px;color:#aaaaaa;transform:scaleX(0.9762)">(RPM)</div>
<div class="t wm" style="left:1000.45px;top:341.00px;font-size:13px;color:#ffffff;transform:scaleX(1.0250)">Político</div>
<div class="t wm" style="left:1047.38px;top:341.00px;font-size:13px;color:#ffffff;transform:scaleX(0.9031)">CORRUPTO</div>
<div class="t wm" style="left:1117.58px;top:341.00px;font-size:13px;color:#ffffff;transform:scaleX(1.0482)">lo</div>
<div class="t wm" style="left:1131.41px;top:341.00px;font-size:13px;color:#ffffff;transform:scaleX(1.0126)">reta</div>
<div class="t wm" style="left:1157.32px;top:341.00px;font-size:13px;color:#ffffff;transform:scaleX(0.9758)">en</div>
<div class="t wm" style="left:1174.66px;top:341.00px;font-size:13px;color:#ffffff;transform:scaleX(1.0301)">público</div>
<div class="t wm" style="left:1220.33px;top:341.00px;font-size:13px;color:#ffffff;transform:scaleX(0.9496)">y</div>
<div class="t wm" style="left:1229.73px;top:341.00px;font-size:13px;color:#ffffff;transform:scaleX(0.7691)">C…</div>
<div class="t wm" style="left:1000.45px;top:381.00px;font-size:13px;color:#ffffff;transform:scaleX(0.9169)">¡CAYÓ</div>
<div class="t wm" style="left:1040.54px;top:381.00px;font-size:13px;color:#ffffff;transform:scaleX(0.9049)">EL</div>
<div class="t wm" style="left:1058.14px;top:381.00px;font-size:13px;color:#ffffff;transform:scaleX(0.9041)">CARNICERO!:</div>
<div class="t wm" style="left:1138.42px;top:381.00px;font-size:13px;color:#ffffff;transform:scaleX(0.9764)">MANZO</div>
<div class="t wm" style="left:1187.47px;top:381.00px;font-size:13px;color:#ffffff;transform:scaleX(0.8666)">DETIEN…</div>
<div class="t wm" style="left:1001.40px;top:421.00px;font-size:13px;color:#ffffff;transform:scaleX(0.9082)">CARLOS</div>
<div class="t wm" style="left:1053.17px;top:421.00px;font-size:13px;color:#ffffff;transform:scaleX(0.9753)">MANZO</div>
<div class="t wm" style="left:1102.16px;top:421.00px;font-size:13px;color:#ffffff;transform:scaleX(0.9237)">ENCARA</div>
<div class="t wm" style="left:1155.42px;top:421.00px;font-size:13px;color:#ffffff;transform:scaleX(0.9772)">A</div>
<div class="t wm" style="left:1167.11px;top:421.00px;font-size:13px;color:#ffffff;transform:scaleX(0.9080)">COMANDA…</div>
<div class="t wm" style="left:1444.80px;top:341.00px;font-size:13px;color:#ffffff;transform:scaleX(1.0180)">$</div>
<div class="t wm" style="left:1455.41px;top:341.00px;font-size:13px;color:#ffffff;transform:scaleX(0.9841)">30,89</div>
<div class="t wm" style="left:1452.20px;top:381.00px;font-size:13px;color:#ffffff;transform:scaleX(1.0169)">$</div>
<div class="t wm" style="left:1462.79px;top:381.00px;font-size:13px;color:#ffffff;transform:scaleX(0.9733)">2,08</div>
<div class="t wm" style="left:1452.20px;top:421.00px;font-size:13px;color:#ffffff;transform:scaleX(1.0169)">$</div>
<div class="t wm" style="left:1462.79px;top:421.00px;font-size:13px;color:#ffffff;transform:scaleX(0.9733)">1,83</div>
<div class="t wb" style="left:949.20px;top:490.15px;font-size:14px;color:#f1f1f1;transform:scaleX(0.9603)">Ver</div>
<div class="t wb" style="left:973.58px;top:490.15px;font-size:14px;color:#f1f1f1;transform:scaleX(0.9501)">mais</div>
</body>
</html>
